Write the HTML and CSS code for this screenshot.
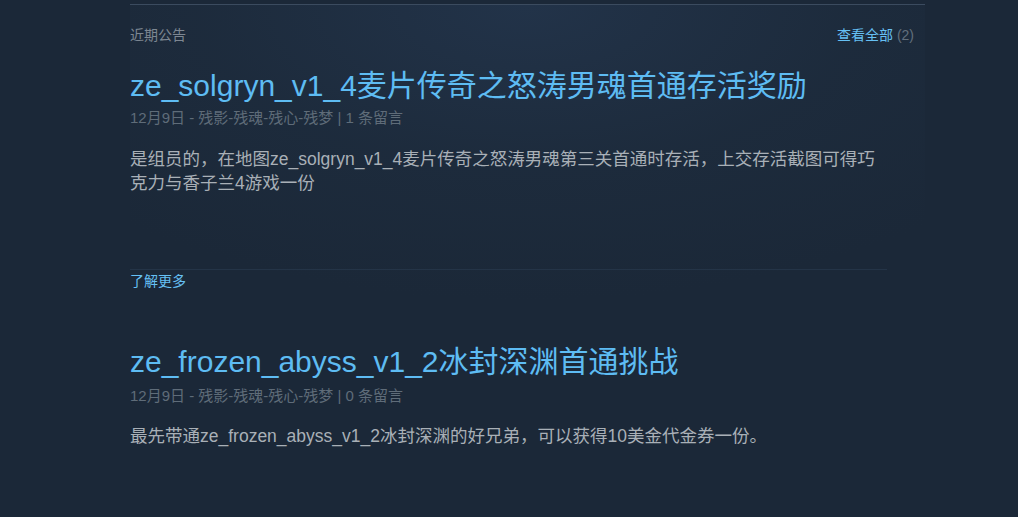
FILE: index.html
```html
<!DOCTYPE html>
<html lang="zh-CN">
<head>
<meta charset="utf-8">
<title>近期公告</title>
<link rel="stylesheet" href="styles.css">
</head>
<body>
<div class="wrap">
  <div class="topline"></div>
  <div class="panel">
    <div class="head">
      <span class="head-title">近期公告</span>
      <span class="head-link"><a class="link" href="#">查看全部</a> <span class="count">(2)</span></span>
    </div>

    <div class="post first">
      <div class="post-main">
        <div class="post-title">ze_solgryn_v1_4麦片传奇之怒涛男魂首通存活奖励</div>
        <div class="post-meta">12月9日 - 残影-残魂-残心-残梦 | 1 条留言</div>
        <div class="post-body">是组员的，在地图ze_solgryn_v1_4麦片传奇之怒涛男魂第三关首通时存活，上交存活截图可得巧克力与香子兰4游戏一份</div>
      </div>
      <div class="post-foot"><a class="link more" href="#">了解更多</a></div>
    </div>

    <div class="post second">
      <div class="post-main">
        <div class="post-title">ze_frozen_abyss_v1_2冰封深渊首通挑战</div>
        <div class="post-meta">12月9日 - 残影-残魂-残心-残梦 | 0 条留言</div>
        <div class="post-body">最先带通ze_frozen_abyss_v1_2冰封深渊的好兄弟，可以获得10美金代金券一份。</div>
      </div>
    </div>
  </div>
</div>
</body>
</html>
```

FILE: styles.css
```css
html, body {
  margin: 0;
  padding: 0;
}

body {
  background: #1b2838;
  font-family: "Liberation Sans", "Noto Sans CJK SC", sans-serif;
  height: 517px;
  overflow: hidden;
}

.wrap {
  margin-left: 130px;
  width: 795px;
  padding-top: 4px;
}

.topline {
  height: 1px;
  background: #3b4b5f;
}

.panel {
  background: radial-gradient(ellipse 75% 60% at 50% 0%, #223349 0%, rgba(30, 45, 63, 0.6) 55%, rgba(27, 40, 56, 0) 100%);
  padding-top: 20px;
  padding-bottom: 50px;
}

.head {
  display: flex;
  justify-content: space-between;
  align-items: center;
  padding-right: 11px;
  font-size: 14px;
  line-height: 20px;
}

.head-title {
  color: #7d8792;
}

.link {
  color: #66c0f4;
  text-decoration: none;
}

.count {
  color: #626f7c;
}

.post {
  width: 757px;
}

.post.first {
  margin-top: 21px;
}

.post.first .post-main {
  min-height: 203px;
}

.post-title {
  font-size: 30px;
  line-height: 40px;
  color: #5ebcf3;
  white-space: nowrap;
}

.post-meta {
  margin-top: 2px;
  font-size: 15px;
  line-height: 20px;
  color: #5f6c79;
}

.post-body {
  margin-top: 19px;
  font-size: 17.5px;
  line-height: 24px;
  color: #a9b0b7;
}

.post-foot {
  border-top: 1px solid #243447;
  padding-top: 2px;
  font-size: 14px;
  line-height: 18px;
}

.post.second {
  margin-top: 52px;
}

.post.second .post-meta {
  margin-top: 4px;
}

.post.second .post-body {
  margin-top: 18px;
}
```
